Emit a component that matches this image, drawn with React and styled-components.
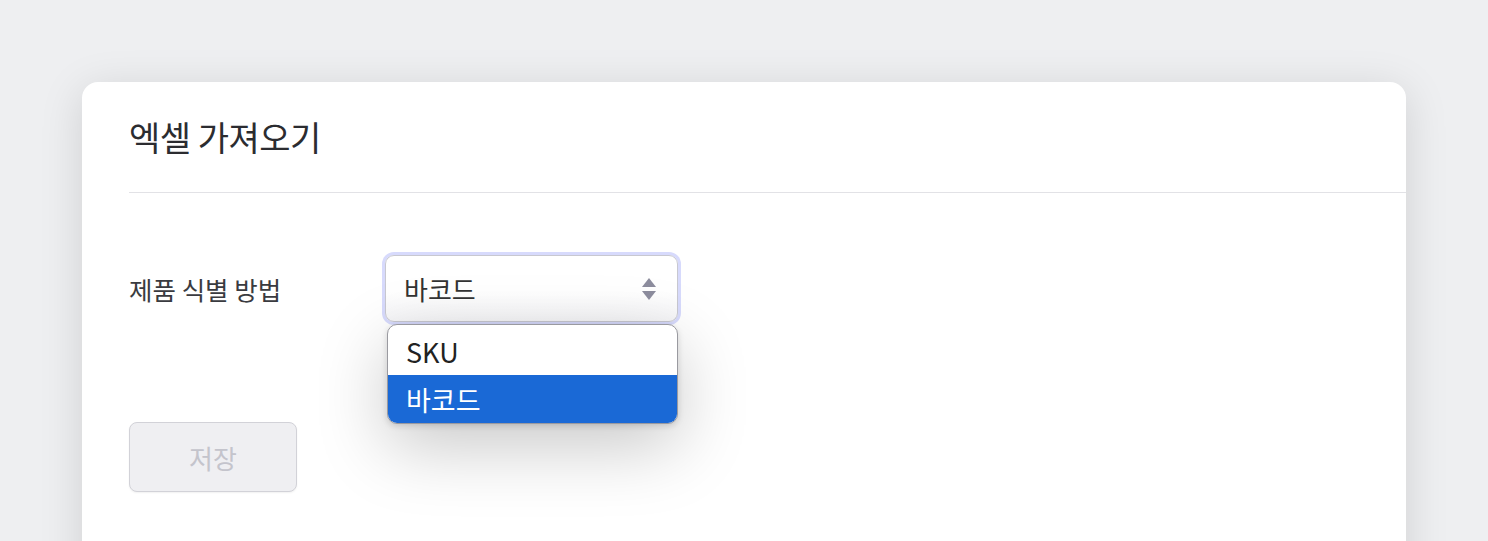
import React from 'react';
import styled, { createGlobalStyle } from 'styled-components';

const GlobalStyle = createGlobalStyle`
  html, body {
    margin: 0;
    padding: 0;
    background: #eeeff1;
    font-family: "Noto Sans CJK KR", "Noto Sans", sans-serif;
    overflow: hidden;
  }
`;

const Page = styled.div`
  height: 541px;
  padding: 82px 82px 0 82px;
  box-sizing: border-box;
`;

const Card = styled.div`
  background: #fff;
  border-radius: 16px 16px 0 0;
  min-height: 600px;
  box-shadow: 0 8px 44px rgba(0, 0, 0, 0.13);
`;

const Header = styled.div`
  margin-left: 47px;
  height: 111px;
  box-sizing: border-box;
  border-bottom: 1px solid #e2e2e6;
  display: flex;
  align-items: center;
  padding-bottom: 2px;
`;

const Title = styled.h1`
  margin: 0;
  font-size: 34px;
  font-weight: 400;
  color: #2b2c30;
  letter-spacing: -0.5px;
`;

const Body = styled.div`
  padding: 59px 47px 0;
  display: flex;
  flex-direction: column;
  gap: 97px;
`;

const Row = styled.div`
  display: flex;
  align-items: center;
`;

const Label = styled.div`
  width: 253px;
  font-size: 25.5px;
  color: #3a3b40;
`;

const SelectWrap = styled.div`
  position: relative;
`;

const SelectBox = styled.div`
  width: 293px;
  height: 67px;
  box-sizing: border-box;
  border: 1px solid #c8c8d0;
  border-radius: 9px;
  box-shadow: 0 0 0 3px #d7dafc;
  background: linear-gradient(#fff 55%, #f5f5f7);
  margin: 3px;
  display: flex;
  align-items: center;
  justify-content: space-between;
  padding: 0 20px 0 18px;
  font-size: 26px;
  color: #333;
`;

const Arrows = styled.svg`
  width: 16px;
  height: 24px;
`;

const Menu = styled.ul`
  position: absolute;
  top: 72px;
  left: 5px;
  width: 291px;
  margin: 0;
  padding: 2px 0 0;
  list-style: none;
  background: #fff;
  border: 1px solid #9a9aa0;
  border-radius: 10px;
  overflow: hidden;
  box-sizing: border-box;
  box-shadow: 0 22px 70px rgba(0, 0, 0, 0.22), 0 2px 6px rgba(0, 0, 0, 0.14);
  z-index: 2;
`;

const Option = styled.li`
  height: 48px;
  display: flex;
  align-items: center;
  padding: 0 18px;
  font-size: 27px;
  color: ${(p) => (p.$active ? '#fff' : '#222')};
  background: ${(p) => (p.$active ? '#1a69d6' : 'transparent')};
`;

const SaveButton = styled.button`
  width: 168px;
  height: 70px;
  border: 1px solid #d2d2d8;
  border-radius: 8px;
  background: #efeff2;
  color: #c4c4cc;
  font-family: inherit;
  font-size: 26px;
  box-shadow: 0 1px 2px rgba(0, 0, 0, 0.06);
`;

export default function App() {
  return (
    <>
      <GlobalStyle />
      <Page>
        <Card>
          <Header>
            <Title>엑셀 가져오기</Title>
          </Header>
          <Body>
            <Row>
              <Label>제품 식별 방법</Label>
              <SelectWrap>
                <SelectBox>
                  <span>바코드</span>
                  <Arrows viewBox="0 0 16 24">
                    <path d="M8 1 L15 10 L1 10 Z" fill="#8d8d9e" />
                    <path d="M1 14 L15 14 L8 23 Z" fill="#8d8d9e" />
                  </Arrows>
                </SelectBox>
                <Menu>
                  <Option>SKU</Option>
                  <Option $active>바코드</Option>
                </Menu>
              </SelectWrap>
            </Row>
            <div>
              <SaveButton disabled>저장</SaveButton>
            </div>
          </Body>
        </Card>
      </Page>
    </>
  );
}
